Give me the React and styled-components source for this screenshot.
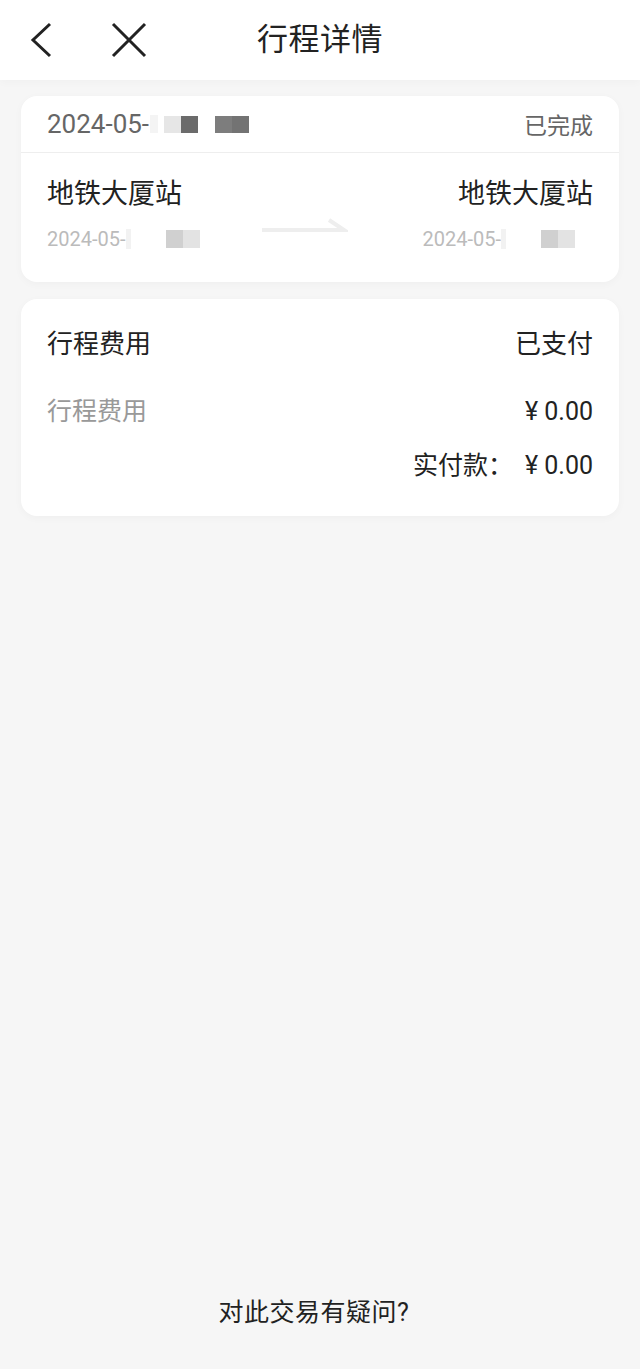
import React from "react";
import styled, { createGlobalStyle } from "styled-components";

const GlobalStyle = createGlobalStyle`
  html, body {
    margin: 0;
    padding: 0;
    background: #f6f6f6;
    font-family: Roboto, "Noto Sans CJK SC", "Noto Sans", sans-serif;
  }
`;

const Page = styled.div`
  width: 640px;
  height: 1369px;
  background: #f6f6f6;
  display: flex;
  flex-direction: column;
`;

const Header = styled.div`
  height: 80px;
  background: #fff;
  display: grid;
  grid-template-columns: 1fr auto 1fr;
  align-items: center;
  box-shadow: 0 3px 8px rgba(0, 0, 0, 0.025);
`;

const Icons = styled.div`
  display: flex;
  align-items: center;
  gap: 56px;
  padding-left: 28px;
`;

const Title = styled.div`
  font-size: 31px;
  color: #222;
  letter-spacing: 0.5px;
  line-height: 40px;
`;

const Content = styled.div`
  flex: 1;
  padding: 16px 21px 0;
  display: flex;
  flex-direction: column;
  gap: 17px;
`;

const Card = styled.div`
  background: #fff;
  border-radius: 16px;
  box-shadow: 0 2px 8px rgba(0, 0, 0, 0.03);
`;

const CardTop = styled.div`
  height: 56px;
  display: flex;
  justify-content: space-between;
  align-items: center;
  padding: 0 26px;
  border-bottom: 1px solid #eee;
  color: #666;
`;

const TopDate = styled.span`
  font-size: 26px;
  display: flex;
  align-items: center;
`;

const Status = styled.span`
  font-size: 23px;
`;

const Mask = styled.span`
  display: inline-block;
  width: ${(p) => p.w}px;
  height: ${(p) => p.h}px;
  background: ${(p) => p.c};
  margin-left: ${(p) => p.ml || 0}px;
`;

const Route = styled.div`
  display: grid;
  grid-template-columns: 1fr auto 1fr;
  align-items: center;
  padding: 23px 26px 30px;
`;

const Stop = styled.div`
  display: flex;
  flex-direction: column;
  align-items: ${(p) => (p.right ? "flex-end" : "flex-start")};
  gap: 14px;
`;

const Station = styled.div`
  font-size: 27px;
  line-height: 36px;
  color: #222;
`;

const SubDate = styled.div`
  font-size: 20px;
  line-height: 26px;
  color: #bbb;
  display: flex;
  align-items: center;
  padding-right: ${(p) => (p.right ? "18px" : "0")};
`;

const Arrow = styled.svg`
  margin: 22px 30px 0 0;
`;

const FeeCard = styled(Card)`
  padding: 27px 26px 33px;
  display: flex;
  flex-direction: column;
`;

const FeeRow = styled.div`
  display: flex;
  justify-content: ${(p) => (p.end ? "flex-end" : "space-between")};
  align-items: center;
  font-size: ${(p) => p.size}px;
  line-height: ${(p) => p.lh}px;
  color: #222;
  margin-top: ${(p) => p.mt || 0}px;
`;

const Muted = styled.span`
  color: #999;
`;

const Amount = styled.span`
  margin-left: ${(p) => p.gap || 0}px;
`;

const Footer = styled.div`
  height: 112px;
  box-sizing: border-box;
  display: flex;
  justify-content: center;
  font-size: 25px;
  line-height: 34px;
  color: #222;
  padding: 39px 12px 0 0;
  letter-spacing: 0.5px;
`;

function SubDateText({ right }) {
  return (
    <SubDate right={right}>
      2024-05-
      <Mask w={5} h={20} c="#f2f2f2" />
      <Mask w={17} h={18} c="#d0d0d0" ml={35} />
      <Mask w={17} h={18} c="#e3e3e3" />
    </SubDate>
  );
}

export default function App() {
  return (
    <Page>
      <GlobalStyle />
      <Header>
        <Icons>
          <svg width="26" height="38" viewBox="0 0 26 38">
            <path d="M22 3 L5 19 L22 35" fill="none" stroke="#222" strokeWidth="3" />
          </svg>
          <svg width="38" height="38" viewBox="0 0 38 38">
            <path d="M3 3 L35 35 M35 3 L3 35" fill="none" stroke="#222" strokeWidth="3" />
          </svg>
        </Icons>
        <Title>行程详情</Title>
        <div />
      </Header>
      <Content>
        <Card>
          <CardTop>
            <TopDate>
              2024-05-
              <Mask w={8} h={18} c="#f4f4f4" ml={1} />
              <Mask w={17} h={17} c="#e6e6e6" ml={6} />
              <Mask w={17} h={17} c="#6b6b6b" />
              <Mask w={17} h={17} c="#7d7d7d" ml={17} />
              <Mask w={17} h={17} c="#737373" />
            </TopDate>
            <Status>已完成</Status>
          </CardTop>
          <Route>
            <Stop>
              <Station>地铁大厦站</Station>
              <SubDateText />
            </Stop>
            <Arrow width="86" height="16" viewBox="0 0 86 16">
              <path d="M0 13 L82 13 L67 3" fill="none" stroke="#eeeeee" strokeWidth="4" />
            </Arrow>
            <Stop right>
              <Station>地铁大厦站</Station>
              <SubDateText right />
            </Stop>
          </Route>
        </Card>
        <FeeCard>
          <FeeRow size={26} lh={36}>
            <span>行程费用</span>
            <span>已支付</span>
          </FeeRow>
          <FeeRow size={25} lh={34} mt={33}>
            <Muted>行程费用</Muted>
            <span>¥ 0.00</span>
          </FeeRow>
          <FeeRow size={25} lh={34} mt={20} end>
            <span>实付款：</span>
            <Amount gap={12}>¥ 0.00</Amount>
          </FeeRow>
        </FeeCard>
      </Content>
      <Footer>对此交易有疑问?</Footer>
    </Page>
  );
}
